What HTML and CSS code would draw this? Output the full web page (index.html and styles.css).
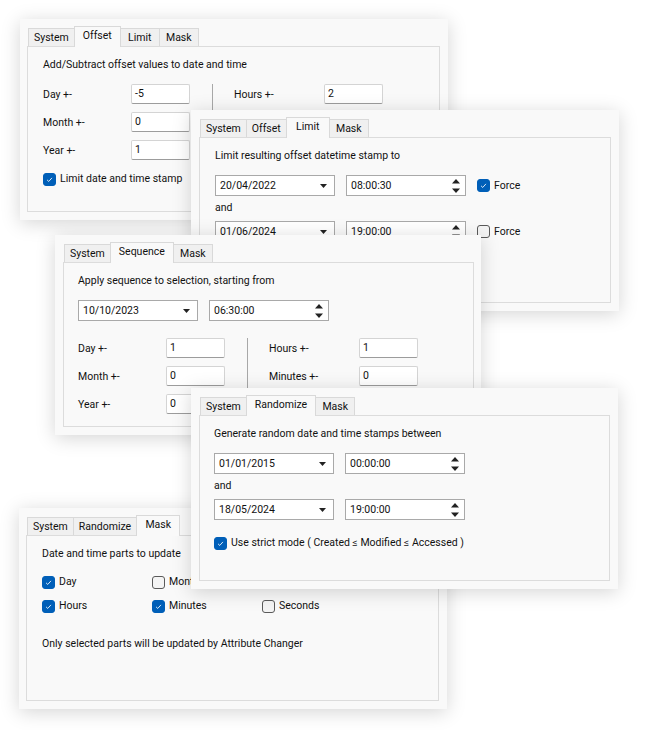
FILE: index.html
```html
<!DOCTYPE html>
<html>
<head>
<meta charset="utf-8">
<link rel="stylesheet" href="styles.css">
</head>
<body>
<div class="canvas">

  <!-- Offset -->
  <div class="win w-offset">
    <div class="tabs">
      <div class="tab">System</div>
      <div class="tab sel">Offset</div>
      <div class="tab">Limit</div>
      <div class="tab">Mask</div>
    </div>
    <div class="box">
      <p class="head">Add/Subtract offset values to date and time</p>
      <div class="fields">
        <div class="fcol">
          <span class="lbl">Day +-</span><span class="txt">-5</span>
          <span class="lbl">Month +-</span><span class="txt">0</span>
          <span class="lbl">Year +-</span><span class="txt">1</span>
        </div>
        <div class="sep"></div>
        <div class="fcol rcol">
          <span class="lbl">Hours +-</span><span class="txt">2</span>
        </div>
      </div>
      <div class="chkrow">
        <span class="cb on"><svg viewBox="0 0 13 13"><polyline points="3.6,6.9 5.6,8.8 9.4,4.6"/></svg></span>
        <span>Limit date and time stamp</span>
      </div>
    </div>
  </div>

  <!-- Limit -->
  <div class="win w-limit">
    <div class="tabs">
      <div class="tab">System</div>
      <div class="tab">Offset</div>
      <div class="tab sel">Limit</div>
      <div class="tab">Mask</div>
    </div>
    <div class="box">
      <p class="head">Limit resulting offset datetime stamp to</p>
      <div class="dtrow">
        <div class="combo"><span>20/04/2022</span><svg class="arrow" viewBox="0 0 7 4"><polygon points="0,0 7,0 3.5,4"/></svg></div>
        <div class="combo"><span>08:00:30</span><svg class="spin" viewBox="0 0 8 14"><polygon points="0,4.5 8,4.5 4,0"/><polygon points="0,9.5 8,9.5 4,14"/></svg></div>
        <div class="chk"><span class="cb on"><svg viewBox="0 0 13 13"><polyline points="3.6,6.9 5.6,8.8 9.4,4.6"/></svg></span><span>Force</span></div>
      </div>
      <p class="and">and</p>
      <div class="dtrow">
        <div class="combo"><span>01/06/2024</span><svg class="arrow" viewBox="0 0 7 4"><polygon points="0,0 7,0 3.5,4"/></svg></div>
        <div class="combo"><span>19:00:00</span><svg class="spin" viewBox="0 0 8 14"><polygon points="0,4.5 8,4.5 4,0"/><polygon points="0,9.5 8,9.5 4,14"/></svg></div>
        <div class="chk"><span class="cb"></span><span>Force</span></div>
      </div>
    </div>
  </div>

  <!-- Sequence -->
  <div class="win w-seq">
    <div class="tabs">
      <div class="tab">System</div>
      <div class="tab sel">Sequence</div>
      <div class="tab">Mask</div>
    </div>
    <div class="box">
      <p class="head">Apply sequence to selection, starting from</p>
      <div class="dtrow">
        <div class="combo"><span>10/10/2023</span><svg class="arrow" viewBox="0 0 7 4"><polygon points="0,0 7,0 3.5,4"/></svg></div>
        <div class="combo"><span>06:30:00</span><svg class="spin" viewBox="0 0 8 14"><polygon points="0,4.5 8,4.5 4,0"/><polygon points="0,9.5 8,9.5 4,14"/></svg></div>
      </div>
      <div class="fields seqfields">
        <div class="fcol">
          <span class="lbl">Day +-</span><span class="txt">1</span>
          <span class="lbl">Month +-</span><span class="txt">0</span>
          <span class="lbl">Year +-</span><span class="txt">0</span>
        </div>
        <div class="sep"></div>
        <div class="fcol rcol">
          <span class="lbl">Hours +-</span><span class="txt">1</span>
          <span class="lbl">Minutes +-</span><span class="txt">0</span>
        </div>
      </div>
    </div>
  </div>

  <!-- Mask -->
  <div class="win w-mask">
    <div class="tabs">
      <div class="tab">System</div>
      <div class="tab">Randomize</div>
      <div class="tab sel">Mask</div>
    </div>
    <div class="box">
      <p class="head">Date and time parts to update</p>
      <div class="maskgrid">
        <div class="chk"><span class="cb on"><svg viewBox="0 0 13 13"><polyline points="3.6,6.9 5.6,8.8 9.4,4.6"/></svg></span><span>Day</span></div>
        <div class="chk"><span class="cb"></span><span>Month</span></div>
        <div class="chk"></div>
        <div class="chk"><span class="cb on"><svg viewBox="0 0 13 13"><polyline points="3.6,6.9 5.6,8.8 9.4,4.6"/></svg></span><span>Hours</span></div>
        <div class="chk"><span class="cb on"><svg viewBox="0 0 13 13"><polyline points="3.6,6.9 5.6,8.8 9.4,4.6"/></svg></span><span>Minutes</span></div>
        <div class="chk"><span class="cb"></span><span>Seconds</span></div>
      </div>
      <p class="note">Only selected parts will be updated by Attribute Changer</p>
    </div>
  </div>

  <!-- Randomize -->
  <div class="win w-rand">
    <div class="tabs">
      <div class="tab">System</div>
      <div class="tab sel">Randomize</div>
      <div class="tab">Mask</div>
    </div>
    <div class="box">
      <p class="head">Generate random date and time stamps between</p>
      <div class="dtrow">
        <div class="combo"><span>01/01/2015</span><svg class="arrow" viewBox="0 0 7 4"><polygon points="0,0 7,0 3.5,4"/></svg></div>
        <div class="combo"><span>00:00:00</span><svg class="spin" viewBox="0 0 8 14"><polygon points="0,4.5 8,4.5 4,0"/><polygon points="0,9.5 8,9.5 4,14"/></svg></div>
      </div>
      <p class="and">and</p>
      <div class="dtrow">
        <div class="combo"><span>18/05/2024</span><svg class="arrow" viewBox="0 0 7 4"><polygon points="0,0 7,0 3.5,4"/></svg></div>
        <div class="combo"><span>19:00:00</span><svg class="spin" viewBox="0 0 8 14"><polygon points="0,4.5 8,4.5 4,0"/><polygon points="0,9.5 8,9.5 4,14"/></svg></div>
      </div>
      <div class="chkrow strict">
        <span class="cb on"><svg viewBox="0 0 13 13"><polyline points="3.6,6.9 5.6,8.8 9.4,4.6"/></svg></span>
        <span>Use strict mode ( Created ≤ Modified ≤ Accessed )</span>
      </div>
    </div>
  </div>

</div>
</body>
</html>
```

FILE: styles.css
```css
* { box-sizing: border-box; }

html, body {
  margin: 0;
  padding: 0;
  background: #ffffff;
}

body {
  font-family: Roboto, "Liberation Sans", sans-serif;
  font-size: 10.5px;
  color: #111;
}

.canvas {
  position: relative;
  width: 650px;
  height: 730px;
  overflow: hidden;
}

.win {
  position: absolute;
  display: flex;
  flex-direction: column;
  height: 201px;
  padding: 7px 8px 8px 7px;
  background: #f9f9f9;
  box-shadow: 0 3px 18px rgba(0, 0, 0, 0.17);
}

.w-offset { left: 20px; top: 19px; width: 428px; }
.w-limit  { left: 191px; top: 110px; width: 428px; padding-left: 8px; }
.w-seq    { left: 55px; top: 235px; width: 426px; height: 200px; padding-left: 8px; padding-right: 7px; }
.w-mask   { left: 19px; top: 508px; width: 428px; }
.w-rand   { left: 191px; top: 388px; width: 427px; padding-left: 8px; }

/* Tabs */
.tabs {
  display: flex;
  align-items: flex-end;
  height: 20px;
  padding-left: 1px;
  position: relative;
  z-index: 1;
}

.tab {
  height: 18px;
  min-width: 40px;
  line-height: 17px;
  text-align: center;
  padding: 0 5px;
  border: 1px solid #d9d9d9;
  border-bottom: none;
  background: #f0f0f0;
  margin-left: -1px;
  white-space: nowrap;
}
.tab:first-child { margin-left: 0; }

.tab.sel {
  height: 21px;
  min-width: 44px;
  line-height: 17px;
  padding: 0 8px 3px 8px;
  margin-bottom: -1px;
  background: #f9f9f9;
  position: relative;
  z-index: 2;
}

/* Content box */
.box {
  flex: 1;
  border: 1px solid #dcdcdc;
  background: #f9f9f9;
  padding: 10px 15px 0 15px;
}

.w-seq .box, .w-rand .box { padding-left: 14px; }

p { margin: 0; line-height: 16px; white-space: nowrap; }

/* Offset-style fields */
.fields {
  display: flex;
  margin-top: 11px;
}
.seqfields { margin-top: 17px; }

.fcol {
  display: grid;
  grid-template-columns: 88px 59px;
  grid-auto-rows: 20px;
  row-gap: 8px;
  align-items: center;
  align-content: start;
}
.rcol { grid-template-columns: 90px 59px; }

.lbl { white-space: nowrap; }

.txt {
  height: 20px;
  line-height: 18px;
  padding: 0 3px;
  background: #fff;
  border: 1px solid #d4d4d4;
  border-bottom-color: #9c9c9c;
  border-radius: 2px;
}

.sep {
  width: 1px;
  background: #a8a8a8;
  margin: 0 21px 0 22px;
}

/* Checkboxes */
.chkrow {
  display: flex;
  align-items: center;
  gap: 4px;
  margin-top: 11px;
  line-height: 16px;
  white-space: nowrap;
}
.strict { margin-top: 15px; }

.chk {
  display: flex;
  align-items: center;
  gap: 4px;
  min-height: 16px;
  line-height: 16px;
  white-space: nowrap;
}

.cb {
  width: 13px;
  height: 13px;
  flex: none;
  border-radius: 3px;
  border: 1px solid #5a5a5a;
  background: #f4f4f4;
  display: inline-flex;
}
.cb.on {
  border-color: #005fb8;
  background: #005fb8;
}
.cb svg {
  width: 11px;
  height: 11px;
}
.cb polyline {
  fill: none;
  stroke: #ffffff;
  stroke-width: 1;
}

/* Date / time rows */
.dtrow {
  display: flex;
  align-items: center;
  gap: 11px;
  margin-top: 11px;
}
.and { margin-top: 4px; }
.and + .dtrow { margin-top: 5px; }

.combo {
  width: 120px;
  height: 21px;
  display: flex;
  align-items: center;
  justify-content: space-between;
  padding: 0 7px 0 4px;
  background: #fff;
  border: 1px solid #a9a9a9;
}
.combo .arrow { width: 7px; height: 4px; }
.combo .spin { width: 8px; height: 14px; margin-right: -2px; }
.combo polygon { fill: #222; }

/* Mask */
.maskgrid {
  display: grid;
  grid-template-columns: 110px 110px 110px;
  row-gap: 8px;
  margin-top: 12px;
}
.note { margin-top: 22px; }
```
